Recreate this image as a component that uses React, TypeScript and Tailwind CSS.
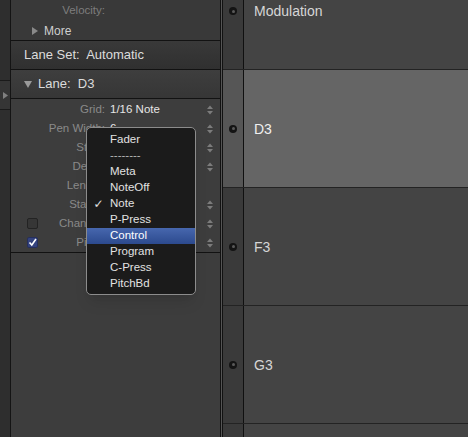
import React from 'react';

const FONT = { fontFamily: '"Liberation Sans", Arial, sans-serif' };

function Stepper() {
  return (
    <svg width="6" height="10" viewBox="0 0 6 10">
      <polygon points="0,4 3,0.5 6,4" fill="#7c7c7c" />
      <polygon points="0,6 3,9.5 6,6" fill="#7c7c7c" />
    </svg>
  );
}

function Dot() {
  return (
    <div className="w-[8px] h-[8px] rounded-full bg-[#141414] flex items-center justify-center">
      <div className="w-[3px] h-[3px] rounded-full bg-[#5a5a5a]" />
    </div>
  );
}

type Prop = { label: string; value: string; step: boolean; check?: 'on' | 'off' };

const props: Prop[] = [
  { label: 'Grid:', value: '1/16 Note', step: true },
  { label: 'Pen Width:', value: '6', step: true },
  { label: 'Style:', value: '', step: true },
  { label: 'Delay:', value: '', step: true },
  { label: 'Length:', value: '', step: false },
  { label: 'Status:', value: '', step: true },
  { label: 'Channel:', value: '', step: true, check: 'off' },
  { label: 'Pitch:', value: '', step: true, check: 'on' },
];

const menuItems = ['Fader', '--------', 'Meta', 'NoteOff', 'Note', 'P-Press', 'Control', 'Program', 'C-Press', 'PitchBd'];

function Row({ label, h, selected, top }: { label: string; h: string; selected?: boolean; top?: boolean }) {
  return (
    <div className={`flex ${h} ${top ? 'items-start' : 'items-center'}`}>
      <div
        className={`w-[21px] h-full border-r border-[#101010] flex justify-center ${top ? 'items-start pt-[7px]' : 'items-center'} ${selected ? 'bg-[#565656]' : 'bg-[#3a3a3a]'}`}
      >
        <Dot />
      </div>
      <div
        className={`flex-1 h-full flex pl-[10px] ${top ? 'items-start pt-[3px]' : 'items-center'} ${selected ? 'bg-[#656565] text-[#f0f0f0]' : 'bg-[#444444] text-[#d6d6d6]'} text-[14px] leading-[16px]`}
      >
        {label}
      </div>
    </div>
  );
}

export default function App() {
  return (
    <div className="relative w-[468px] h-[437px] flex overflow-hidden bg-[#3c3c3c]" style={FONT}>
      {/* left strip */}
      <div className="w-[11px] h-full border-r border-[#141414] bg-[#2e2e2e] flex flex-col">
        <div className="h-[80px]" />
        <div className="h-[30px] border-y border-[#1a1a1a] bg-[#353535] flex items-center pl-[3px]">
          <svg width="5" height="7" viewBox="0 0 5 7">
            <polygon points="0,0 5,3.5 0,7" fill="#808080" />
          </svg>
        </div>
      </div>

      {/* inspector panel */}
      <div className="w-[210px] h-full border-r border-[#121212] bg-[#3d3d3d] flex flex-col">
        <div className="h-[40px] bg-[#393939] flex flex-col">
          <div className="h-[22px] flex items-center">
            <div className="w-[94px] text-right text-[11.5px] text-[#7d7d7d]">Velocity:</div>
          </div>
          <div className="h-[18px] flex items-center pl-[21px] gap-[6px]">
            <svg width="6" height="8" viewBox="0 0 6 8">
              <polygon points="0,0 6,4 0,8" fill="#8a8a8a" />
            </svg>
            <span className="text-[12px] text-[#cfcfcf]">More</span>
          </div>
        </div>
        <div className="h-px bg-[#121212]" />
        <div className="h-[28px] bg-gradient-to-b from-[#393939] to-[#303030] flex items-center pl-[13px] text-[13px] text-[#dcdcdc] whitespace-pre">
          Lane Set:  Automatic
        </div>
        <div className="h-px bg-[#121212]" />
        <div className="h-[28px] bg-gradient-to-b from-[#3e3e3e] to-[#363636] flex items-center pl-[13px] gap-[6px] text-[13px] text-[#dcdcdc] whitespace-pre">
          <svg width="8" height="7" viewBox="0 0 8 7">
            <polygon points="0,0 8,0 4,7" fill="#9a9a9a" />
          </svg>
          <span>Lane:  D3</span>
        </div>
        <div className="h-px bg-[#121212]" />
        <div className="flex flex-col pt-px">
          {props.map((p) => (
            <div key={p.label} className="h-[19px] flex items-center text-[11.5px]">
              <div className="w-[94px] flex items-center">
                <div className="w-[27px] pl-[16px] flex items-center">
                  {p.check === 'off' && (
                    <div className="w-[11px] h-[11px] rounded-[2px] bg-[#363636] border border-[#232323]" />
                  )}
                  {p.check === 'on' && (
                    <div className="w-[11px] h-[11px] rounded-[2px] bg-[#34437e] border border-[#262f5c] flex items-center justify-center">
                      <svg width="9" height="9" viewBox="0 0 9 9">
                        <path d="M1.5 4.5 L3.8 7 L8 1" stroke="#ffffff" strokeWidth="1.6" fill="none" />
                      </svg>
                    </div>
                  )}
                </div>
                <div className="flex-1 text-right text-[#8a8a8a] whitespace-nowrap">{p.label}</div>
              </div>
              <div className="flex-1 pl-[5px] text-[#e6e6e6] whitespace-nowrap">{p.value}</div>
              <div className="w-[6px] mr-[7px] flex items-center">{p.step && <Stepper />}</div>
            </div>
          ))}
        </div>
        <div className="h-px bg-[#121212]" />
        <div className="flex-1 bg-[#3d3d3d]" />
      </div>

      <div className="w-px h-full bg-[#555555]" />
      <div className="w-px h-full bg-[#121212]" />

      {/* lanes */}
      <div className="flex-1 h-full flex flex-col">
        <Row label="Modulation" h="h-[69px]" top />
        <div className="h-px bg-[#232323]" />
        <Row label="D3" h="h-[117px]" selected />
        <div className="h-px bg-[#232323]" />
        <Row label="F3" h="h-[117px]" />
        <div className="h-px bg-[#232323]" />
        <Row label="G3" h="h-[117px]" />
        <div className="h-px bg-[#232323]" />
        <div className="flex flex-1">
          <div className="w-[21px] h-full border-r border-[#101010] bg-[#3a3a3a]" />
          <div className="flex-1 bg-[#444444]" />
        </div>
      </div>

      {/* popup menu */}
      <div className="absolute left-[86px] top-[127px] w-[110px] h-[168px] rounded-[5px] border border-[#8c8c8c] bg-[#1b1b1b] pt-[4px] pb-[2px] flex flex-col shadow-lg">
        {menuItems.map((m) => (
          <div
            key={m}
            className={`h-[16px] flex items-center text-[11.5px] ${m === 'Control' ? 'bg-gradient-to-b from-[#4767ae] to-[#2c4a8e] text-white' : m === '--------' ? 'text-[#b8b8b8]' : 'text-[#e2e2e2]'}`}
          >
            <div className="w-[23px] flex justify-center text-[12px]" style={{ fontFamily: '"DejaVu Sans", sans-serif' }}>
              {m === 'Note' ? '✓' : ''}
            </div>
            <span>{m}</span>
          </div>
        ))}
      </div>
    </div>
  );
}
